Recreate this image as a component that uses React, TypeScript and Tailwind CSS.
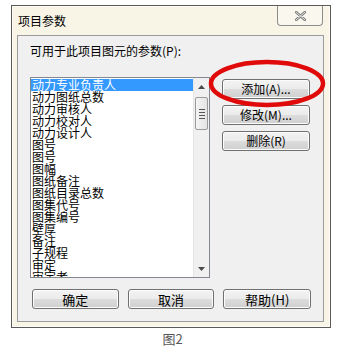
import React from 'react';

const items = [
  '动力专业负责人',
  '动力图纸总数',
  '动力审核人',
  '动力校对人',
  '动力设计人',
  '图号',
  '图号',
  '图幅',
  '图纸备注',
  '图纸目录总数',
  '图集代号',
  '图集编号',
  '壁厚',
  '备注',
  '子规程',
  '审定',
  '审定者',
];

const font = { fontFamily: '"Noto Sans CJK SC", "Liberation Sans", sans-serif' };

function WinButton({ label, className = '' }: { label: string; className?: string }) {
  return (
    <div
      className={`flex items-center justify-center h-[20px] border border-[#707070] rounded-[3px] bg-[linear-gradient(#f3f3f3,#ebebeb_50%,#dddddd_50%,#cfcfcf)] text-[12px] leading-none text-black shadow-[inset_0_0_0_1px_#fcfcfc] ${className}`}
    >
      {label}
    </div>
  );
}

function Triangle({ down = false }: { down?: boolean }) {
  return (
    <svg width="7" height="4" viewBox="0 0 7 4">
      <path d={down ? 'M0 0 H7 L3.5 4 Z' : 'M0 4 H7 L3.5 0 Z'} fill="#4a4a4a" />
    </svg>
  );
}

function Scrollbar() {
  return (
    <div className="flex flex-col w-[16px] h-full bg-[#f0f0f0] border-l border-[#e6e6e6]">
      <div className="h-[17px] flex items-center justify-center">
        <Triangle />
      </div>
      <div className="mt-[2px] mx-[1px] h-[33px] border border-[#9a9a9a] rounded-[2px] bg-[linear-gradient(90deg,#f4f4f4,#e4e4e4)] flex flex-col items-center justify-center gap-[2px]">
        <div className="w-[6px] h-px bg-[#555]" />
        <div className="w-[6px] h-px bg-[#555]" />
        <div className="w-[6px] h-px bg-[#555]" />
        <div className="w-[6px] h-px bg-[#555]" />
      </div>
      <div className="flex-1" />
      <div className="h-[17px] flex items-center justify-center">
        <Triangle down />
      </div>
    </div>
  );
}

export default function App() {
  return (
    <div className="relative w-[344px] h-[348px] bg-white overflow-hidden" style={font}>
      <div className="pt-[5px] pl-[11px]">
        <div className="relative w-[320px] h-[323px] border border-[#5a5a5a] bg-[#f8f5e6] shadow-[inset_0_0_0_1px_#fffdf3]">
          {/* title bar */}
          <div className="flex justify-between h-[29px]">
            <div className="pl-[6px] pt-[8px] text-[12px] leading-[14px] text-black">项目参数</div>
            <div className="mr-[7px] w-[46px] h-[20px] border border-t-0 border-[#8c8c8c] rounded-b-[4px] bg-[#faf8ee] flex items-center justify-center">
              <svg width="11" height="10" viewBox="0 0 11 10">
                <path
                  d="M1 1 L10 9 M10 1 L1 9"
                  stroke="#7a7a7a"
                  strokeWidth="2.6"
                  strokeLinecap="round"
                />
                <path d="M1 1 L10 9 M10 1 L1 9" stroke="#f4f4f4" strokeWidth="0.9" strokeLinecap="round" />
              </svg>
            </div>
          </div>

          {/* client area */}
          <div className="ml-[5px] w-[307px] h-[287px] border border-[#9c9c9c] bg-[#f0f0f0] px-[12px] pt-[8px]">
            <div className="text-[12px] leading-[14px] text-black">可用于此项目图元的参数(P):</div>

            <div className="flex mt-[19px]">
              <div className="flex w-[180px] h-[201px] border border-[#828790] bg-white">
                <div className="flex-1 overflow-hidden pt-px">
                  {items.map((item, i) => (
                    <div
                      key={i}
                      className={`h-[12px] pl-px text-[12px] leading-[12px] whitespace-nowrap ${
                        i === 0 ? 'bg-[#3399ff] text-white' : 'text-black'
                      }`}
                    >
                      {item}
                    </div>
                  ))}
                </div>
                <Scrollbar />
              </div>

              <div className="flex flex-col gap-[6px] ml-[12px] mt-[2px]">
                <WinButton label="添加(A)..." className="w-[88px]" />
                <WinButton label="修改(M)..." className="w-[88px]" />
                <WinButton label="删除(R)" className="w-[88px]" />
              </div>
            </div>

            <div className="flex gap-[9px] mt-[11px] pl-[2px]">
              <WinButton label="确定" className="w-[87px] text-[13px]" />
              <WinButton label="取消" className="w-[87px] text-[13px]" />
              <WinButton label="帮助(H)" className="w-[88px] text-[13px]" />
            </div>
          </div>
        </div>
      </div>

      <div className="text-center text-[13px] leading-[15px] text-[#555] mt-[3px] pl-px">图2</div>

      {/* red annotation ellipse */}
      <svg className="absolute left-[206px] top-[58px]" width="122" height="52" viewBox="0 0 122 52">
        <ellipse cx="61" cy="25.5" rx="56" ry="21.5" fill="none" stroke="#e00a0a" strokeWidth="4.5" />
      </svg>
    </div>
  );
}
